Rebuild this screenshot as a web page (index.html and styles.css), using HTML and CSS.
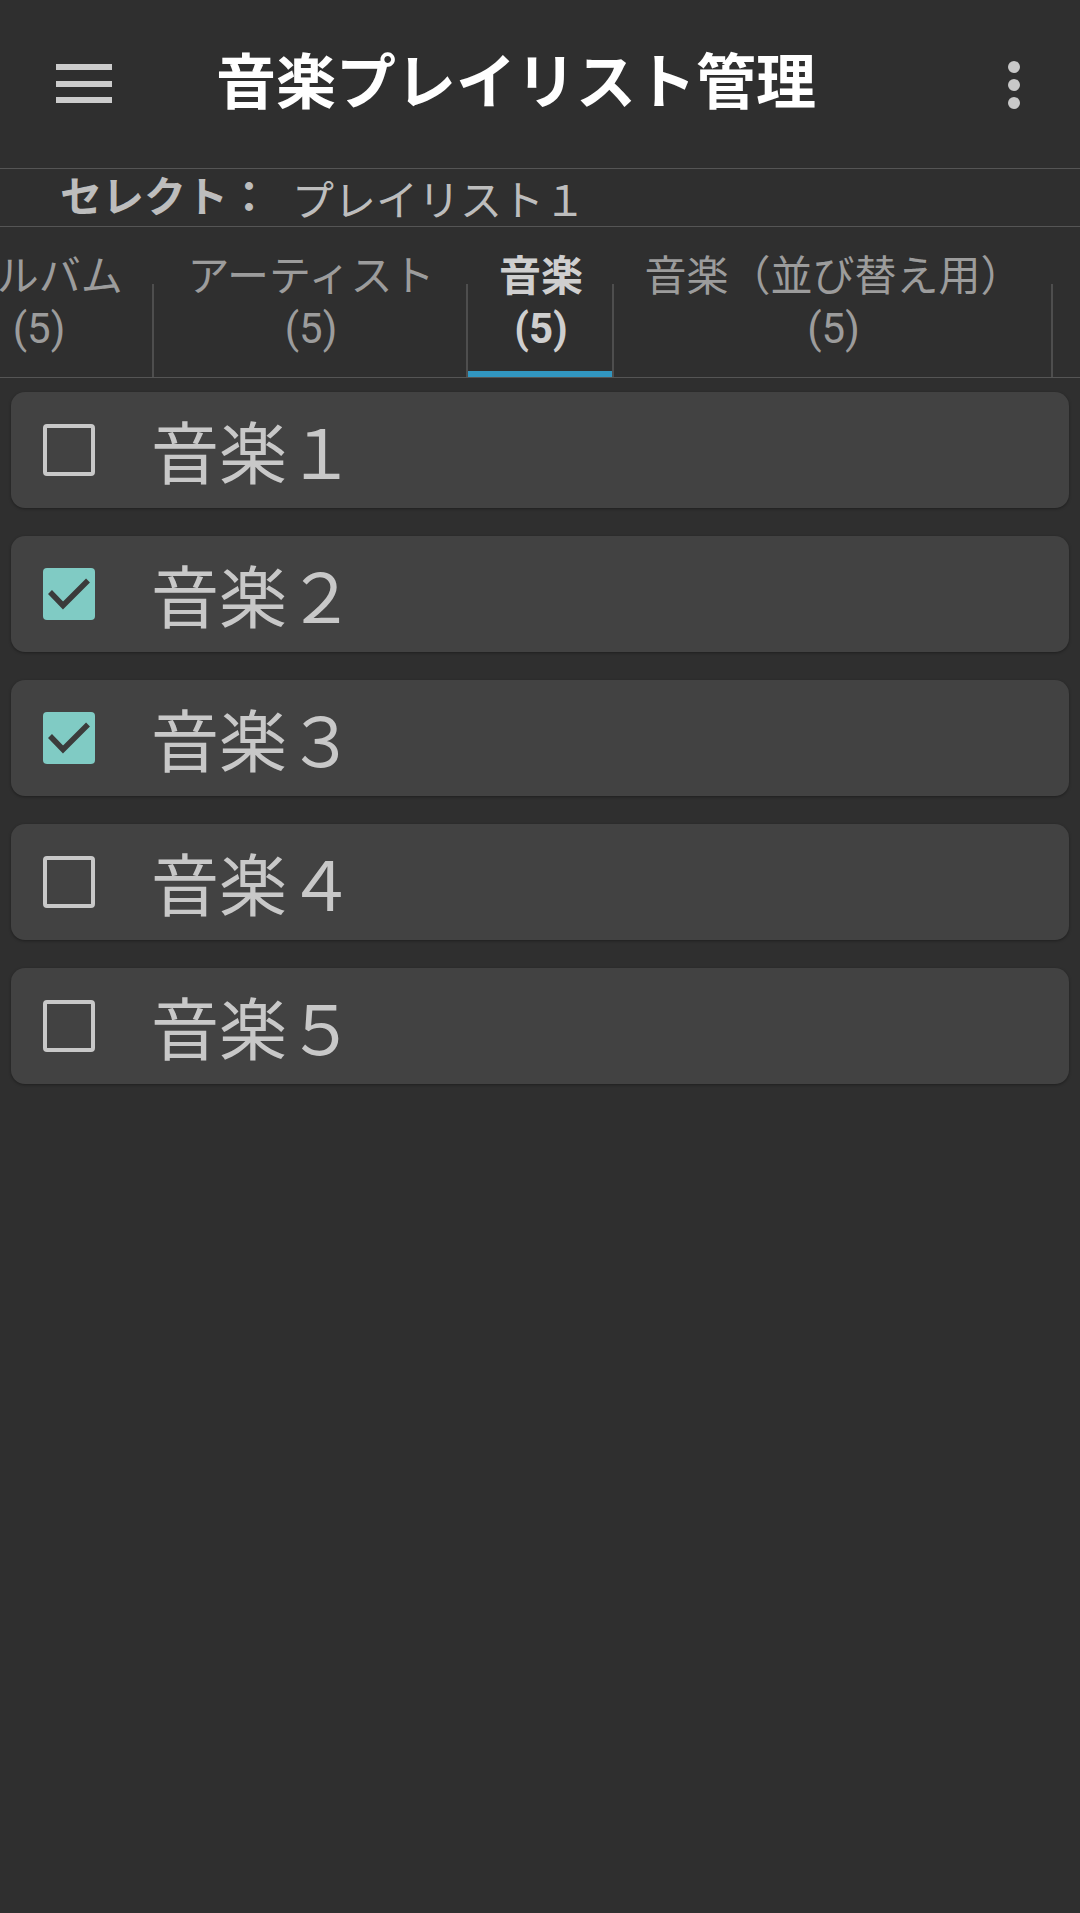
FILE: index.html
```html
<!DOCTYPE html>
<html lang="ja">
<head>
<meta charset="utf-8">
<title>音楽プレイリスト管理</title>
<link rel="stylesheet" href="styles.css">
</head>
<body>
<div class="app">
  <header class="toolbar">
    <div class="menu-btn" aria-label="menu">
      <span class="bar"></span><span class="bar"></span><span class="bar"></span>
    </div>
    <h1 class="title">音楽プレイリスト管理</h1>
    <div class="overflow-btn" aria-label="more">
      <span class="dot"></span><span class="dot"></span><span class="dot"></span>
    </div>
  </header>
  <div class="selected-row">
    <span class="selected-label">セレクト：</span><span class="selected-value">プレイリスト１</span>
  </div>
  <nav class="tabs">
    <div class="tab-strip">
      <div class="tab tab-album"><span class="tab-name">アルバム</span><span class="tab-count">(5)</span></div>
      <div class="tab tab-artist"><span class="tab-name">アーティスト</span><span class="tab-count">(5)</span></div>
      <div class="tab tab-music active"><span class="tab-name">音楽</span><span class="tab-count">(5)</span></div>
      <div class="tab tab-sort"><span class="tab-name">音楽（並び替え用）</span><span class="tab-count">(5)</span></div>
      <div class="tab tab-extra"></div>
    </div>
  </nav>
  <ul class="list">
    <li class="card"><span class="checkbox"></span><span class="card-text">音楽１</span></li>
    <li class="card"><span class="checkbox checked"><svg viewBox="0 0 52 52" width="52" height="52"><path d="M7 24 L20 37.5 L45 12.5" fill="none" stroke="#3b3b3b" stroke-width="5.5"/></svg></span><span class="card-text">音楽２</span></li>
    <li class="card"><span class="checkbox checked"><svg viewBox="0 0 52 52" width="52" height="52"><path d="M7 24 L20 37.5 L45 12.5" fill="none" stroke="#3b3b3b" stroke-width="5.5"/></svg></span><span class="card-text">音楽３</span></li>
    <li class="card"><span class="checkbox"></span><span class="card-text">音楽４</span></li>
    <li class="card"><span class="checkbox"></span><span class="card-text">音楽５</span></li>
  </ul>
</div>
</body>
</html>
```
FILE: styles.css
```css
html, body {
  margin: 0;
  padding: 0;
  background: #2f2f2f;
}
body {
  width: 1080px;
  height: 1913px;
  overflow: hidden;
  font-family: Roboto, "Noto Sans CJK JP", sans-serif;
}
.app {
  display: flex;
  flex-direction: column;
}
.toolbar {
  display: flex;
  align-items: center;
  padding-left: 56px;
  border-bottom: 1px solid #555;
  box-sizing: border-box;
  height: 169px;
}
.menu-btn {
  width: 56px;
  display: flex;
  flex-direction: column;
  gap: 10.5px;
  margin-top: -1px;
}
.bar {
  display: block;
  height: 6px;
  background: #cccccc;
}
.title {
  margin: 0 0 0 104px;
  font-size: 60px;
  font-weight: 700;
  color: #ffffff;
  line-height: 1;
  flex: 1;
}
.overflow-btn {
  width: 12px;
  margin-right: 60px;
  display: flex;
  flex-direction: column;
  gap: 6px;
  margin-top: 1px;
}
.dot {
  display: block;
  width: 12px;
  height: 12px;
  border-radius: 50%;
  background: #c8c8c8;
}
.selected-row {
  height: 58px;
  box-sizing: border-box;
  border-bottom: 1px solid #555;
  display: flex;
  align-items: center;
  padding-left: 60px;
  font-size: 42px;
  color: #bdbdbd;
  line-height: 1;
}
.selected-label {
  font-weight: 700;
  margin-right: 22px;
}
.selected-value {
  font-weight: 400;
  font-family: "Noto Sans CJK JP", sans-serif;
}
.tabs {
  height: 151px;
  box-sizing: border-box;
  border-bottom: 1px solid #555;
  overflow: hidden;
}
.tab-strip {
  display: flex;
  height: 150px;
  margin-left: -76px;
}
.tab {
  position: relative;
  flex: none;
  display: flex;
  flex-direction: column;
  align-items: center;
  justify-content: center;
  padding-top: 2px;
  box-sizing: border-box;
  font-size: 42px;
  line-height: 52px;
  color: #9c9c9c;
  white-space: nowrap;
}
.tab::after {
  content: "";
  position: absolute;
  right: 0;
  top: 57px;
  bottom: 0;
  width: 2px;
  background: #4e4e4e;
}
.tab-album { width: 230px; }
.tab-artist { width: 314px; }
.tab-music { width: 146px; }
.tab-sort { width: 439px; }
.tab-extra { width: 200px; }
.tab-extra::after { display: none; }
.tab.active {
  color: #cfcfcf;
  font-weight: 700;
}
.tab.active::before {
  content: "";
  position: absolute;
  left: 0;
  right: 0;
  bottom: 0;
  height: 6px;
  background: #3196c0;
}
.list {
  list-style: none;
  margin: 0;
  padding: 14px 11px 0;
  display: flex;
  flex-direction: column;
  gap: 28px;
}
.card {
  height: 116px;
  background: #424242;
  border-radius: 14px;
  box-shadow: 0 1px 3px rgba(0, 0, 0, 0.35);
  display: flex;
  align-items: center;
  padding-left: 32px;
}
.checkbox {
  width: 52px;
  height: 52px;
  box-sizing: border-box;
  border: 4.5px solid #c8c8c8;
  border-radius: 4px;
  flex: none;
  display: block;
}
.checkbox.checked {
  border: none;
  background: #80cbc4;
}
.checkbox svg {
  display: block;
}
.card-text {
  margin-left: 56px;
  font-family: "Noto Sans CJK JP", sans-serif;
  font-size: 68px;
  line-height: 1;
  color: #c8c8c8;
}
```
